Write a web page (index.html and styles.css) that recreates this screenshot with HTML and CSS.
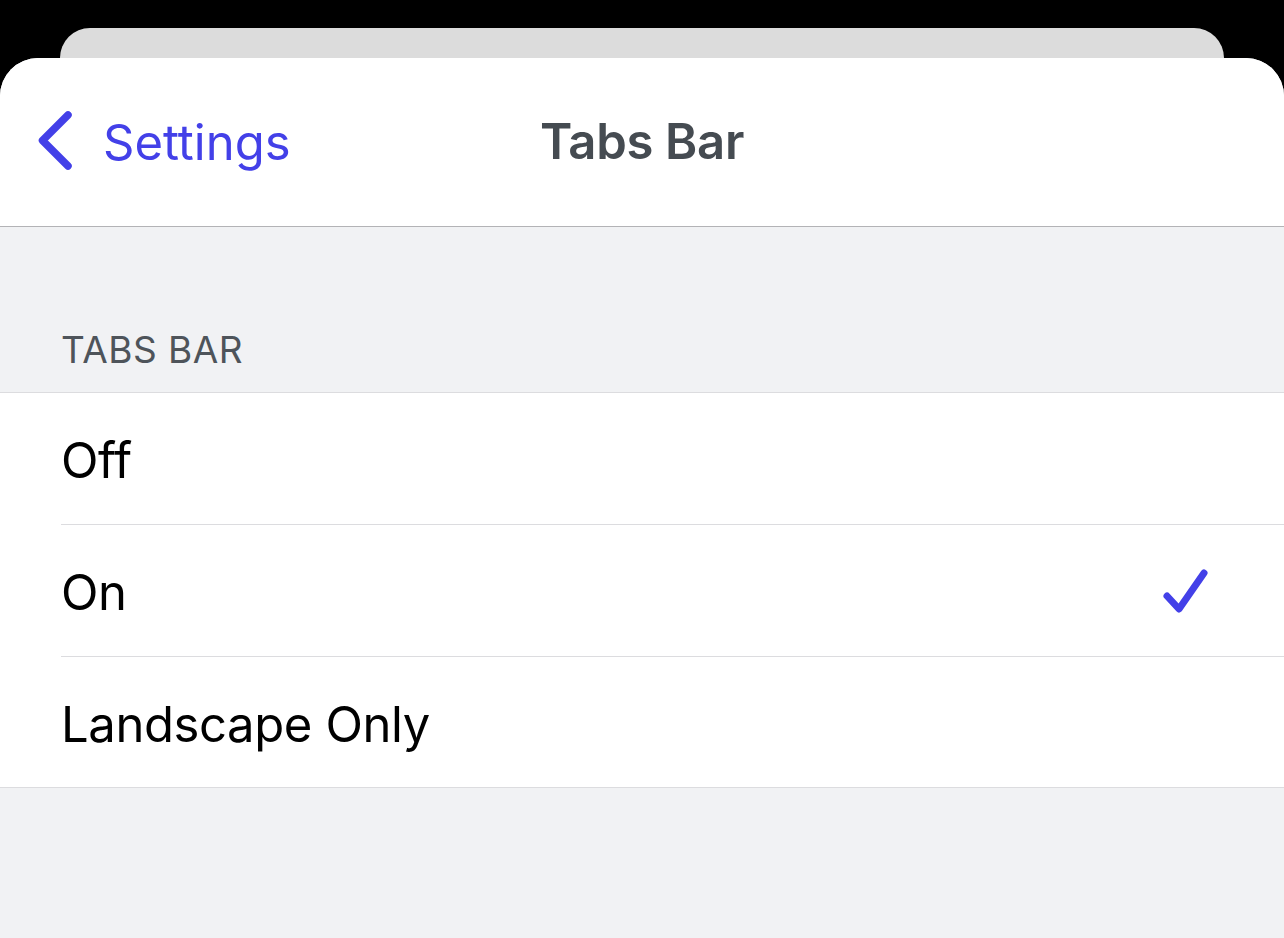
FILE: index.html
```html
<!DOCTYPE html>
<html>
<head>
<meta charset="utf-8">
<link rel="stylesheet" href="styles.css">
</head>
<body>
<div class="screen">
  <div class="backcard"></div>
  <div class="sheet">
    <header class="nav">
      <a class="back">
        <svg class="chev" width="38" height="62" viewBox="0 0 38 62">
          <path d="M32 5 L6.5 30.5 L32 56" fill="none" stroke="#4340e8" stroke-width="7.5" stroke-linecap="round" stroke-linejoin="round"/>
        </svg>
        <span class="back-label">Settings</span>
      </a>
      <h1 class="title">Tabs Bar</h1>
    </header>
    <main class="content">
      <div class="section-header">TABS BAR</div>
      <ul class="list">
        <li class="row"><span class="row-label">Off</span></li>
        <li class="row"><span class="row-label">On</span>
          <svg class="check" width="50" height="48" viewBox="0 0 50 48">
            <path d="M5 29 L17 42 L42 6" fill="none" stroke="#4340e8" stroke-width="7" stroke-linecap="round" stroke-linejoin="round"/>
          </svg>
        </li>
        <li class="row"><span class="row-label">Landscape Only</span></li>
      </ul>
    </main>
  </div>
</div>
</body>
</html>
```
FILE: styles.css
```css
html, body {
  margin: 0;
  padding: 0;
  height: 100%;
  background: #000;
  overflow: hidden;
}
.screen {
  height: 938px;
  display: flex;
  flex-direction: column;
  padding-top: 28px;
  box-sizing: border-box;
  font-family: Inter, "Noto Sans", "Liberation Sans", sans-serif;
}
.backcard {
  height: 30px;
  margin: 0 60px;
  background: #dcdcdc;
  border-radius: 32px 32px 0 0;
  flex: none;
}
.sheet {
  flex: 1;
  background: #f1f2f4;
  border-radius: 38px 38px 0 0;
  overflow: hidden;
  display: flex;
  flex-direction: column;
}
.nav {
  height: 168px;
  flex: none;
  background: #fff;
  border-bottom: 1px solid #b3b3b6;
  position: relative;
  display: flex;
  align-items: center;
  justify-content: center;
}
.back {
  position: absolute;
  left: 36px;
  top: 52px;
  display: flex;
  align-items: center;
  gap: 29px;
  color: #4340e8;
}
.chev {
  display: block;
}
.back-label {
  font-size: 49px;
  letter-spacing: 0;
  position: relative;
  top: 1px;
}
.title {
  margin: 0;
  font-size: 49px;
  font-weight: 600;
  color: #454b51;
  letter-spacing: -0.3px;
  position: relative;
  top: -1px;
}
.content {
  flex: 1;
  display: flex;
  flex-direction: column;
}
.section-header {
  height: 166px;
  box-sizing: border-box;
  padding: 0 61px 20px;
  display: flex;
  align-items: flex-end;
  font-size: 37px;
  color: #4e545a;
  letter-spacing: 0.5px;
  border-bottom: 1px solid #dcdcdf;
}
.list {
  list-style: none;
  margin: 0;
  padding: 0 0 0 61px;
  background: #fff;
  border-bottom: 1px solid #dcdcdf;
}
.row {
  height: 131px;
  display: flex;
  align-items: center;
  justify-content: space-between;
  padding-right: 72px;
  border-bottom: 1px solid #dcdcdf;
}
.row:last-child {
  border-bottom: none;
  height: 130px;
}
.row-label {
  font-size: 49px;
  color: #000;
  letter-spacing: -0.4px;
  position: relative;
  top: 2px;
}
.check {
  display: block;
}
```
